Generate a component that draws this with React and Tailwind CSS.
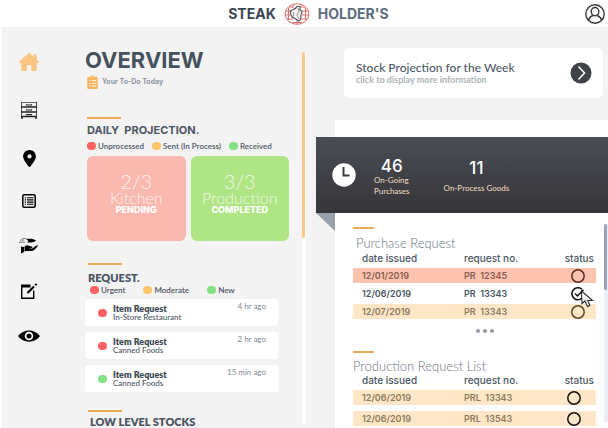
import { FaClipboardList } from "react-icons/fa";
import { FaHouseChimney, FaLocationDot } from "react-icons/fa6";

const display = "font-['Inter',sans-serif]";

function Logo() {
  return (
    <svg viewBox="0 0 26 22" className="h-[22px] w-[26px]" fill="none" aria-hidden="true">
      <g stroke="#d65f62" strokeWidth="0.900">
        <ellipse cx="13" cy="11" rx="12" ry="10.3" />
        <path d="M5 4H9M17 4H21M2 8H7M18 8H24M1 12H6M18 12H25M3 16H9M17 16H23M8 19.5H18M9 1.5V5M17 1.5V4M13 18V21M4.500 5V17M21.500 5V17" />
      </g>
      <path
        d="M8 7C10 6 12 6 12.5 4C14 2.5 17 3.5 16 6C15 8 18 6.5 18 9C18 11 16 11 17 14C17 17 15 19 13 17C11 15 8 15 7 12C6 10 6.500 8 8 7Z"
        fill="#f7f3f2"
        stroke="#4a4a4a"
        strokeWidth="1.1"
      />
      <path d="M14 5L15 8L13 12L15 16M9 9L10 13" stroke="#77706e" strokeWidth="0.8" />
    </svg>
  );
}

function ProfileIcon() {
  return (
    <svg viewBox="0 0 20 20" className="size-5" fill="none" stroke="#34373b" strokeWidth="1.4">
      <circle cx="10" cy="10" r="9.2" />
      <ellipse cx="10" cy="7.600" rx="3.800" ry="4.100" />
      <path d="M3.500 16C4 13.500 5.500 12.500 7.800 11.500M16.500 16C16 13.500 14.500 12.500 12.200 11.500" />
    </svg>
  );
}

function DrawersIcon() {
  return (
    <svg viewBox="0 0 18 18" className="size-[18px]" fill="none" stroke="#222">
      <path d="M1 1.500H17" stroke="#666" />
      <path d="M1.500 1V17M16.500 1V17" strokeWidth="0.8" />
      <path d="M1 6H17M1 11H17M1 15.500H17" strokeWidth="1.400" />
      <path d="M6.500 3.200V4H11.500V3.200M6.500 8.200V9H11.500V8.200M6.500 13V13.700H11.500V13" strokeWidth="1.200" />
      <path d="M1.200 17H3M15 17H16.800" strokeWidth="1.500" />
    </svg>
  );
}

function ListIcon() {
  return (
    <svg viewBox="0 0 14 14" className="size-[14px]" fill="none" stroke="#000">
      <rect x="0.800" y="0.800" width="12.400" height="12.400" rx="1.500" strokeWidth="1.500" />
      <path d="M5 3.700H11.500M5 5.900H11.500M5 8.100H11.500M5 10.300H11.500" strokeWidth="1.100" />
      <path d="M2.700 3.700H4M2.700 5.900H4M2.700 8.100H4M2.700 10.300H4" strokeWidth="1.100" />
    </svg>
  );
}

function GivingIcon() {
  return (
    <svg viewBox="0 0 20 16" className="h-4 w-5" fill="#000">
      <path d="M7 1C10 0.500 15 0.500 17 2.800C15 4.500 11 5 8 4.300L9.500 3Z" />
      <path d="M1 2H5M0 4.200H6M3.500 0.500H7" stroke="#444" strokeWidth="0.700" />
      <path d="M2 8.500L5 9V14L2 15.500ZM5.500 8.500C7.500 7 9 7 10.500 8L13 8.500C14 9 13.500 10 12 10L9.500 10.200L13 10.500C15 9.500 17 7 18.800 7.200C19.300 8 15.500 12.500 13 13C10 13.300 8 12.500 5.500 13.500Z" />
    </svg>
  );
}

function EditIcon() {
  return (
    <svg viewBox="0 0 18 17" className="h-[17px] w-[18px]" fill="none" stroke="#000">
      <path d="M1.700 2V15.300H13.700V7.500" strokeWidth="1.400" />
      <path d="M1 3H10.500" strokeWidth="3" />
      <path d="M7.500 10L14 3.500" strokeWidth="2.200" />
      <path d="M15.200 2.300L16.600 0.900" strokeWidth="2" />
    </svg>
  );
}

function EyeIcon() {
  return (
    <svg viewBox="0 0 22 12" className="h-3 w-[22px]">
      <path d="M0 6C5 -1.500 17 -1.500 22 6C17 13.500 5 13.500 0 6Z" />
      <circle cx="11" cy="6" r="3.400" fill="none" stroke="#fff" strokeWidth="1.700" />
    </svg>
  );
}

function NavButton({ label, children }) {
  return (
    <button type="button" aria-label={label} className="flex h-5 w-6 items-center justify-center">
      {children}
    </button>
  );
}

function Accent() {
  return <div className="h-[2px] w-[34px] bg-[#eaaa57]" />;
}

const dotColors = {
  red: "bg-[#ff6262]",
  amber: "bg-[#ffc56b]",
  green: "bg-[#83e183]",
};

function Dot({ color }) {
  return <span className={`h-2 w-[9px] shrink-0 rounded-full ${dotColors[color]}`} />;
}

function Legend({ items, className }) {
  return (
    <ul className={`flex text-[8px] leading-3 font-semibold text-[#4b5562] ${className}`}>
      {items.map(([color, label]) => (
        <li key={label} className="flex items-center gap-[2px] whitespace-nowrap">
          <Dot color={color} />
          <span>{label}</span>
        </li>
      ))}
    </ul>
  );
}

function ProjectionCard({ count, name, state, className }) {
  return (
    <div className={`flex h-[85px] flex-1 flex-col items-center rounded-md pt-4 text-white ${className}`}>
      <span className="text-[20px] leading-[18px] font-light opacity-80">{count}</span>
      <span className="text-[16px] leading-4 font-light opacity-80">{name}</span>
      <span className={`text-[9px] leading-2 font-extrabold ${display}`}>{state}</span>
    </div>
  );
}

function RequestItem({ color, place, time }) {
  return (
    <li className="flex h-[27px] rounded-[3px] bg-white pr-3 pl-[13px]">
      <span className="flex items-center">
        <Dot color={color} />
      </span>
      <div className="ml-[6px] flex-1 pt-[5px]">
        <p className="text-[9px] leading-[9px] font-extrabold text-[#3f4a57]">Item Request</p>
        <p className="text-[8px] leading-2 font-medium text-[#4b5562]">{place}</p>
      </div>
      <time className="text-[8px] leading-[14px] text-[#7f8994]">{time}</time>
    </li>
  );
}

const rowTones = {
  red: "bg-[#fec4b0] text-[#8a5a50]",
  amber: "bg-[#ffe6c6] text-[#8c7a60]",
  plain: "bg-white text-[#4b5562]",
};

function StatusBox({ checked, label, tone }) {
  return (
    <label className="inline-flex size-[14px] align-middle">
      <input type="checkbox" defaultChecked={checked} aria-label={label} className="absolute size-[14px] appearance-none" />
      <svg viewBox="0 0 14 14" className="size-[14px]" fill="none" stroke={tone} strokeWidth="1.500">
        {checked ? (
          <>
            <path d="M11 2.300A6 6 0 1 0 12.500 9" />
            <path d="M4 6.500L6.500 9L12.500 2.800" />
          </>
        ) : (
          <circle cx="7" cy="7" r="6.200" />
        )}
      </svg>
    </label>
  );
}

function RequestTable({ rows, rowGap }) {
  return (
    <table className={`w-full table-fixed border-collapse text-left text-[9px] ${display}`}>
      <thead>
        <tr className="h-3 text-[10px] leading-3 text-[#4b5562]">
          <th className="w-[42%] pl-[9px] font-medium">date issued</th>
          <th className="w-[40%] pl-[9px] font-medium">request no.</th>
          <th className="pr-[2px] text-right font-medium">status</th>
        </tr>
        <tr className="h-1">
          <td colSpan={3} />
        </tr>
      </thead>
      {rows.map((row) => (
        <tbody key={row.no + row.tone}>
          <tr className={`${row.height} leading-[14px] font-semibold ${rowTones[row.tone]}`}>
            <td className="py-0 pl-[9px]">{row.date}</td>
            <td className="py-0 pl-[9px] whitespace-pre">{row.no}</td>
            <td className={`relative py-0 text-right leading-none ${row.inset}`}>
              <StatusBox checked={row.checked} tone={row.stroke} label={`Status of ${row.no}`} />
              {row.checked && (
                <svg viewBox="0 0 14 18" className="absolute top-[7px] right-[2px] z-10 h-[18px] w-[14px]" aria-hidden="true">
                  <path d="M1.500 1L2 13.500L5 11L7.500 16.500L9.800 15.500L7.800 10.500L12.500 10.500Z" fill="#fff" stroke="#26282b" strokeWidth="1.100" />
                </svg>
              )}
            </td>
          </tr>
          {rowGap && (
            <tr className="h-[6px]">
              <td colSpan={3} />
            </tr>
          )}
        </tbody>
      ))}
    </table>
  );
}

const purchases = [
  { date: "12/01/2019", no: "PR  12345", tone: "red", stroke: "#5a2a20", height: "h-[15px]", inset: "pr-[11px]" },
  { date: "12/06/2019", no: "PR  13343", tone: "plain", stroke: "#111", height: "h-[21px]", inset: "pr-[11px]", checked: true },
  { date: "12/07/2019", no: "PR  13343", tone: "amber", stroke: "#5c4423", height: "h-[15px]", inset: "pr-[11px]" },
];

const productions = [
  { date: "12/06/2019", no: "PRL  13343", tone: "amber", stroke: "#111", height: "h-[15px]", inset: "pr-[15px]" },
  { date: "12/06/2019", no: "PRL  13543", tone: "amber", stroke: "#111", height: "h-[15px]", inset: "pr-[15px]" },
];

export default function App() {
  return (
    <div className="flex h-screen flex-col overflow-hidden bg-[#f3f3f3] font-['Lato',sans-serif]">
      <header className="grid h-[27px] shrink-0 grid-cols-[24fr_auto_25fr] items-center gap-2 bg-white pr-[3px]">
        <span className={`pl-4 text-right text-[14px] leading-4 font-bold text-[#3b4654] ${display}`}>STEAK</span>
        <Logo />
        <div className="flex items-center justify-between">
          <span className={`text-[14px] leading-4 font-bold text-[#5d6d7e] ${display}`}>HOLDER'S</span>
          <button type="button" aria-label="Profile">
            <ProfileIcon />
          </button>
        </div>
      </header>

      <div className="flex min-h-0 flex-1 border-l-2 border-white">
        <nav className="flex w-[83px] shrink-0 flex-col gap-[23px] pt-[25px] pl-[15px]">
          <div className="flex flex-col gap-7">
            <NavButton label="Home"><FaHouseChimney className="size-5 text-[#fbc583]" /></NavButton>
            <NavButton label="Inventory"><DrawersIcon /></NavButton>
            <NavButton label="Location"><FaLocationDot className="size-[17px]" /></NavButton>
          </div>
          <div className="flex flex-col gap-[25px]">
            <NavButton label="Lists"><ListIcon /></NavButton>
            <NavButton label="Deliveries"><GivingIcon /></NavButton>
            <NavButton label="Edit"><EditIcon /></NavButton>
            <NavButton label="View"><EyeIcon /></NavButton>
          </div>
        </nav>

        <main className="flex w-[221px] shrink-0">
          <div className="min-w-0 flex-1 overflow-hidden pt-5">
            <h1 className={`text-[22px] leading-[26px] font-bold text-[#46515e] ${display}`}>OVERVIEW</h1>
            <p className={`mt-px flex h-4 items-center gap-1 pl-[2px] text-[7px] font-bold text-[#8f97a3] ${display}`}>
              <FaClipboardList className="h-[14px] w-[11px] text-[#fab65f]" />
              Your To-Do Today
            </p>

            <section className="mt-[27px] pr-[13px] pl-[2px]">
              <Accent />
              <h2 className={`mt-1 text-[11px] leading-[15px] font-bold whitespace-pre text-[#4b5562] ${display}`}>
                DAILY  PROJECTION.
              </h2>
              <Legend
                className="mt-[2px] gap-2"
                items={[["red", "Unprocessed"], ["amber", "Sent (In Process)"], ["green", "Received"]]}
              />
              <div className="mt-1 flex gap-[5px]">
                <ProjectionCard count="2/3" name="Kitchen" state="PENDING" className="bg-[#f9b9ae]" />
                <ProjectionCard count="3/3" name="Production" state="COMPLETED" className="bg-[#afe585]" />
              </div>
            </section>

            <section className="mt-[22px] pr-6">
              <div className="pl-[3px]">
                <Accent />
                <h2 className="mt-[6px] text-[11px] leading-[13px] font-extrabold text-[#4b5562]">REQUEST.</h2>
                <Legend
                  className="gap-[18px] pl-[2px]"
                  items={[["red", "Urgent"], ["amber", "Moderate"], ["green", "New"]]}
                />
              </div>
              <ul className="mt-[3px] flex flex-col gap-[6px]">
                <RequestItem color="red" place="In-Store Restaurant" time="4 hr ago" />
                <RequestItem color="red" place="Canned Foods" time="2 hr ago" />
                <RequestItem color="green" place="Canned Foods" time="15 min ago" />
              </ul>
            </section>

            <section className="mt-[18px] pl-[3px]">
              <Accent />
              <h2 className="mt-[3px] pl-[2px] text-[11px] leading-[13px] font-extrabold text-[#4b5562]">LOW LEVEL STOCKS</h2>
            </section>
          </div>
          <div className="mt-[25px] mb-1 w-1 bg-[#fcfcfc]">
            <div className="h-1/2 w-[3px] rounded-full bg-[#fbcb85]" />
          </div>
        </main>

        <div className="flex min-w-0 flex-1 flex-col pl-[10px]">
          <button type="button" className="mt-[21px] mr-[5px] ml-7 flex h-[50px] shrink-0 items-center justify-between rounded-md bg-white pr-[11px] pl-3 text-left">
            <span>
              <span className="block text-[12px] leading-[14px] font-medium text-[#4e5a68]">Stock Projection for the Week</span>
              <span className="block text-[9px] leading-[10px] font-bold text-[#adb4b8]">click to display more information</span>
            </span>
            <svg viewBox="0 0 22 22" className="h-[22px] w-[22px]" aria-hidden="true">
              <circle cx="11" cy="11" r="10.500" fill="#3f4247" />
              <path d="M8.500 4.500L14.500 11L8.500 17.500" fill="none" stroke="#fff" strokeWidth="1.500" />
            </svg>
          </button>

          <div className="mt-[22px] ml-[19px] flex min-h-0 flex-1 flex-col bg-white pt-[17px]">
            <div className="relative -ml-[19px] flex h-[76px] shrink-0 items-center bg-linear-to-b from-[#494d54] to-[#37363a] pl-4">
              <svg viewBox="0 0 24 24" className="size-6" aria-hidden="true">
                <circle cx="12" cy="12" r="11.700" fill="#fff" />
                <path d="M11.500 4V12.500H17.500" fill="none" stroke="#3d3e42" strokeWidth="2" />
              </svg>
              <div className="ml-[18px] flex flex-col pt-1 text-[8px] leading-[11px] font-medium text-[#e9d5bb]">
                <strong className={`text-center text-[17px] leading-[18px] font-medium text-white ${display}`}>46</strong>
                <span>On-Going<br />Purchases</span>
              </div>
              <div className="ml-[34px] flex flex-col gap-1 pt-1 text-[8px] leading-[14px] font-medium text-[#e9d5bb]">
                <strong className={`text-center text-[17px] leading-[18px] font-medium text-white ${display}`}>11</strong>
                <span>On-Process Goods</span>
              </div>
              <span className="absolute top-full left-0 h-[18px] w-[19px] bg-[#98a0ab] [clip-path:polygon(0_0,100%_0,100%_100%)]" />
            </div>

            <div className="flex min-h-0 flex-1">
              <div className="min-w-0 flex-1 overflow-hidden pt-[14px] pr-2 pl-[18px]">
                <section>
                  <div className="h-[2px] w-[21px] bg-[#eaaa57]" />
                  <h2 className="mt-[6px] mb-px pl-[3px] text-[13px] leading-4 font-light text-[#6b747e]">Purchase Request</h2>
                  <RequestTable rows={purchases} />
                  <button type="button" aria-label="More purchase requests" className="mx-auto mt-[10px] flex gap-[3px] pl-5">
                    <span className="size-1 rounded-full bg-[#939ba8]" />
                    <span className="size-1 rounded-full bg-[#939ba8]" />
                    <span className="size-1 rounded-full bg-[#939ba8]" />
                  </button>
                </section>
                <section className="mt-[18px]">
                  <div className="h-[2px] w-[21px] bg-[#eaaa57]" />
                  <h2 className="mt-[5px] text-[13px] leading-4 font-light text-[#6b747e]">Production Request List</h2>
                  <RequestTable rows={productions} rowGap />
                </section>
              </div>
              <div className="mt-[11px] mb-[6px] w-1 bg-[#eceef7]">
                <div className="h-1/3 w-[3px] rounded-full bg-[#98a2b8]" />
              </div>
            </div>
          </div>
        </div>
      </div>
    </div>
  );
}
